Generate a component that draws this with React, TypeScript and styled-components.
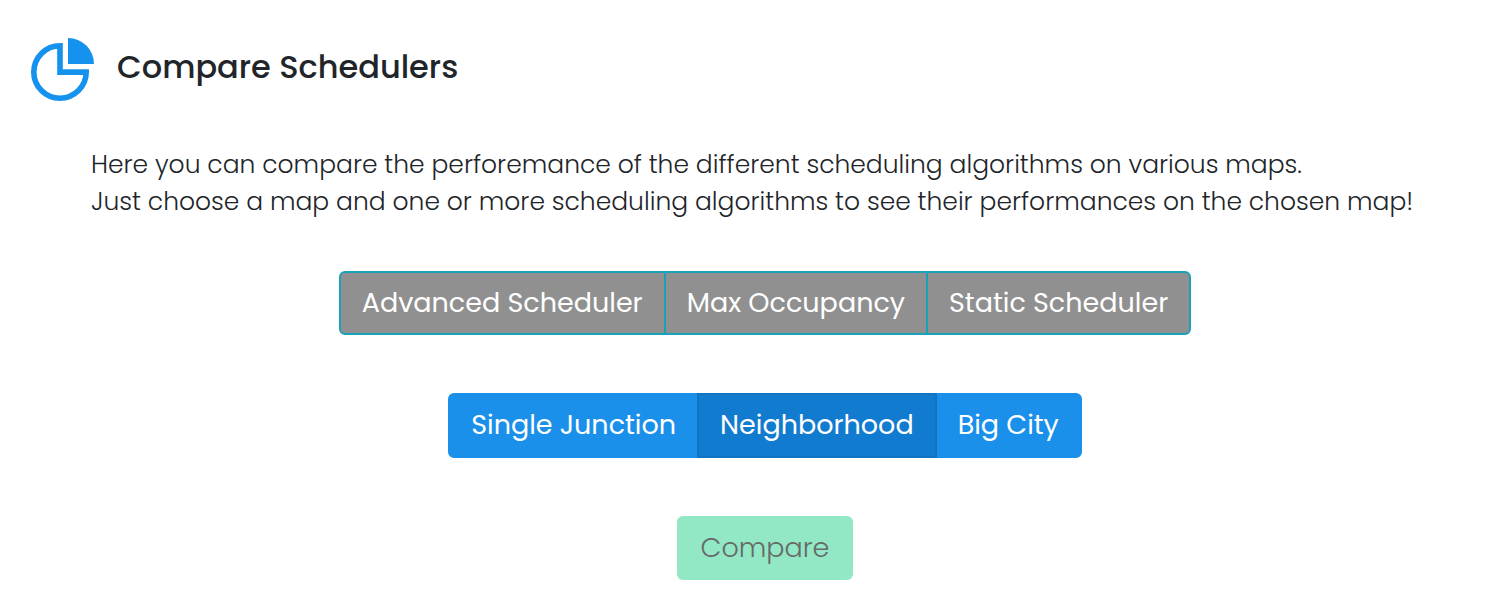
import React, { useState } from "react";
import styled, { createGlobalStyle } from "styled-components";

const GlobalStyle = createGlobalStyle`
  *, *::before, *::after { box-sizing: border-box; }
  body {
    margin: 0;
    background: #ffffff;
    color: #212529;
    font-family: Poppins, Inter, sans-serif;
  }
`;

const Page = styled.main`
  padding: 36px 0 20px;
`;

const Header = styled.header`
  display: flex;
  align-items: flex-start;
  gap: 21px;
  padding-left: 30px;
`;

const Title = styled.h1`
  margin: 0;
  padding-top: 11px;
  font-size: 32px;
  line-height: 40px;
  font-weight: 500;
`;

const Intro = styled.p`
  margin: 44px 0 0;
  padding-left: 91px;
  font-size: 25px;
  line-height: 37px;
  font-weight: 300;
`;

const Controls = styled.section`
  display: flex;
  flex-direction: column;
  align-items: center;
  gap: 58px;
  margin-top: 51px;
  padding-left: 33px;
`;

const Group = styled.div`
  display: flex;
`;

const BaseButton = styled.button`
  height: 64px;
  padding: 0 21px;
  border: 2px solid transparent;
  font-family: inherit;
  font-size: 27px;
  line-height: 40px;
  font-weight: 400;
  white-space: nowrap;
  cursor: pointer;

  & + & { margin-left: -2px; }
  &:first-child { border-radius: 6px 0 0 6px; }
  &:last-child { border-radius: 0 6px 6px 0; }
`;

const SchedulerButton = styled(BaseButton)<{ $selected: boolean }>`
  background: ${({ $selected }) => ($selected ? "#17a2b8" : "#909090")};
  border-color: #17a2b8;
  color: #ffffff;
`;

const MapButton = styled(BaseButton)<{ $selected: boolean }>`
  height: 65px;
  padding-bottom: 1px;
  background: ${({ $selected }) => ($selected ? "#117bcf" : "#1b90ea")};
  border-color: ${({ $selected }) => ($selected ? "#1174c2" : "#1b90ea")};
  color: #ffffff;
  position: relative;
  z-index: ${({ $selected }) => ($selected ? 1 : 0)};
`;

const CompareButton = styled(BaseButton)`
  && {
    padding: 0 22px;
    border-radius: 6px;
  }
  background: #92e7c4;
  color: #666a68;
  font-weight: 300;
`;

const PieIcon = () => (
  <svg width="66" height="66" viewBox="0 0 66 66" aria-hidden="true">
    <path d="M30 9.8A26.2 26.2 0 1 0 56.2 36.1H30Z" fill="none" stroke="#1592ee" strokeWidth="5.6" />
    <path d="M38 2A26 26 0 0 1 64 28H38Z" fill="#1592ee" />
  </svg>
);

const schedulers = ["Advanced Scheduler", "Max Occupancy", "Static Scheduler"];
const maps = ["Single Junction", "Neighborhood", "Big City"];

export default function App() {
  const [chosen, setChosen] = useState<string[]>([]);
  const [map, setMap] = useState("Neighborhood");

  const toggle = (name: string) =>
    setChosen((list) => (list.includes(name) ? list.filter((n) => n !== name) : [...list, name]));

  return (
    <>
      <GlobalStyle />
      <Page>
        <Header>
          <PieIcon />
          <Title>Compare Schedulers</Title>
        </Header>
        <Intro>
          Here you can compare the perforemance of the different scheduling algorithms on various maps.
          <br />
          Just choose a map and one or more scheduling algorithms to see their performances on the chosen map!
        </Intro>
        <Controls>
          <Group role="group" aria-label="Schedulers">
            {schedulers.map((name) => (
              <SchedulerButton
                key={name}
                type="button"
                $selected={chosen.includes(name)}
                aria-pressed={chosen.includes(name)}
                onClick={() => toggle(name)}
              >
                {name}
              </SchedulerButton>
            ))}
          </Group>
          <Group role="group" aria-label="Map">
            {maps.map((name) => (
              <MapButton
                key={name}
                type="button"
                $selected={map === name}
                aria-pressed={map === name}
                onClick={() => setMap(name)}
              >
                {name}
              </MapButton>
            ))}
          </Group>
          <CompareButton type="button" disabled={chosen.length === 0}>
            Compare
          </CompareButton>
        </Controls>
      </Page>
    </>
  );
}
